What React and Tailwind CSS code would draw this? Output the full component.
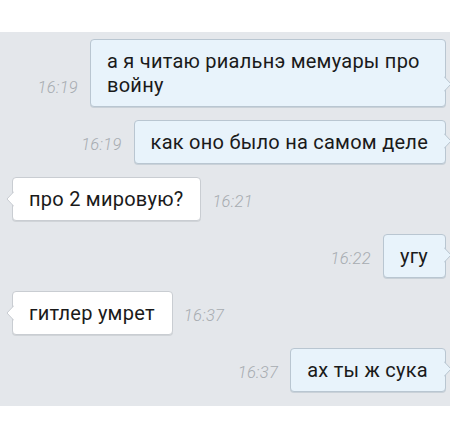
export default function App() {
  const font = { fontFamily: "Roboto, 'Noto Sans', sans-serif" };
  const Time = ({ t }) => (
    <span className="mb-[11px] text-[16.5px] leading-[16px] font-light italic tracking-[0.3px] text-[#a7acb1] shrink-0">{t}</span>
  );
  const Out = ({ text, t }) => (
    <div className="flex justify-end items-end pr-[4px]">
      <Time t={t} />
      <div className="relative ml-[12px] max-w-[356px] rounded-[4px] border border-[#b9c6d1] bg-[#e8f3fb] pl-[16px] pr-[17px] py-[9px] text-[20px] tracking-[0.25px] leading-[24px] text-[#1a1a1a] shadow-[0_1px_0_#c9d1d8]">
        {text}
        <svg className="absolute right-[-7px] bottom-[14px]" width="8" height="16" viewBox="0 0 8 16">
          <path d="M0 0.5 L7 8 L0 15.5" fill="#e8f3fb" stroke="#b9c6d1" strokeWidth="1" />
        </svg>
      </div>
    </div>
  );
  const In = ({ text, t }) => (
    <div className="flex justify-start items-end pl-[12px]">
      <div className="relative mr-[11px] rounded-[4px] border border-[#c9cdd2] bg-white pl-[16px] pr-[17px] py-[9px] text-[20px] tracking-[0.25px] leading-[24px] text-[#1a1a1a] shadow-[0_1px_0_#d0d4d8]">
        {text}
        <svg className="absolute left-[-7px] bottom-[13px]" width="8" height="16" viewBox="0 0 8 16">
          <path d="M8 0.5 L1 8 L8 15.5" fill="#ffffff" stroke="#c9cdd2" strokeWidth="1" />
        </svg>
      </div>
      <Time t={t} />
    </div>
  );
  return (
    <div className="w-[450px] h-[443px] bg-white overflow-hidden" style={font}>
      <div className="h-[32px] bg-white" />
      <div className="bg-[#e4e7eb] h-[374px] pt-[7px] flex flex-col gap-[13px]">
        <Out text="а я читаю риальнэ мемуары про войну" t="16:19" />
        <Out text="как оно было на самом деле" t="16:19" />
        <In text="про 2 мировую?" t="16:21" />
        <Out text="угу" t="16:22" />
        <In text="гитлер умрет" t="16:37" />
        <Out text="ах ты ж сука" t="16:37" />
      </div>
    </div>
  );
}
